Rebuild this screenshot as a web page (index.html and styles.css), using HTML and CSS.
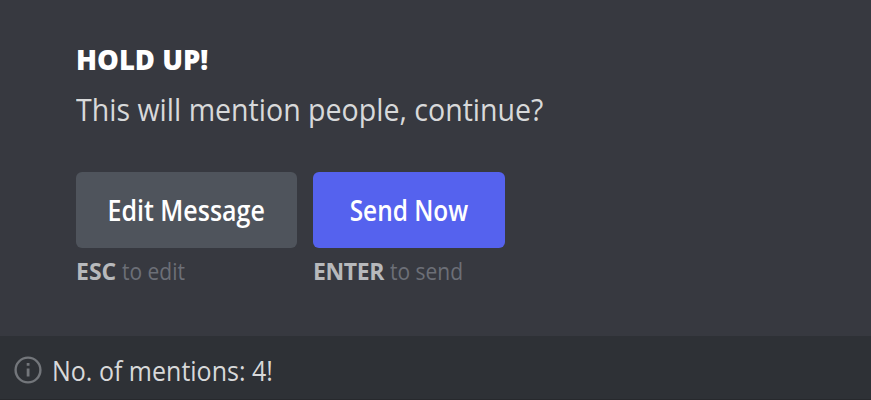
FILE: index.html
```
<!DOCTYPE html>
<html lang="en">
<head>
<meta charset="utf-8">
<title>Hold up!</title>
<link rel="stylesheet" href="styles.css">
</head>
<body>
<main class="dialog">
  <h1 class="title"><span class="fit fit-title">HOLD UP!</span></h1>
  <p class="question"><span class="fit fit-question">This will mention people, continue?</span></p>
  <div class="actions">
    <div class="action-edit">
      <button class="button button-edit"><span class="fit fit-edit">Edit Message</span></button>
      <p class="hint"><b>ESC</b> <span class="fit fit-hint">to edit</span></p>
    </div>
    <div class="action-send">
      <button class="button button-send"><span class="fit fit-send">Send Now</span></button>
      <p class="hint"><b class="enter">ENTER</b> <span class="fit fit-hint">to send</span></p>
    </div>
  </div>
</main>
<footer class="status">
  <svg class="info" viewBox="0 0 28 28" aria-hidden="true">
    <circle cx="14" cy="14" r="12.4" fill="none" stroke="currentColor" stroke-width="2.4"/>
    <path d="M12.7 7h2.8v2.8h-2.8zM12.7 12.4h2.8v8h-2.8z" fill="currentColor"/>
  </svg>
  <span class="fit fit-status">No. of mentions: 4!</span>
</footer>
</body>
</html>
```
FILE: styles.css
```
* { box-sizing: border-box; }
body {
  margin: 0;
  height: 400px;
  display: flex;
  flex-direction: column;
  overflow: hidden;
  background: #373940;
  font-family: "Open Sans", "Noto Sans", sans-serif;
}
h1, p { margin: 0; white-space: nowrap; }
.fit { display: inline-block; white-space: nowrap; transform-origin: left center; }
.fit-title { transform: scaleX(.98); }
.fit-question { transform: scaleX(.921); }
.fit-edit { transform: scaleX(.893); }
.fit-send { transform: scaleX(.872); }
.fit-hint { transform: scaleX(.913); }
.fit-status { transform: scaleX(.926); }
.dialog { height: 336px; padding: 43px 76px 0; }
.title { font-size: 28px; line-height: 32px; font-weight: 800; color: #fff; }
.question { margin-top: 14px; font-size: 31px; line-height: 40px; color: #d8d9da; }
.actions { display: flex; gap: 16px; margin-top: 43px; }
.action-edit { width: 221px; }
.action-send { width: 192px; }
.button {
  display: flex;
  align-items: center;
  justify-content: center;
  width: 100%;
  height: 76px;
  padding: 0;
  border: 0;
  border-radius: 6px;
  color: #fff;
  font: 600 28px "Open Sans", "Noto Sans", sans-serif;
}
.button .fit { transform-origin: center; }
.button-edit { background: #4f545c; }
.button-send { background: #5562ee; }
.hint {
  display: flex;
  gap: 6px;
  margin-top: 7px;
  font-size: 23px;
  line-height: 32px;
  color: #6c6f77;
}
.hint b { color: #b7b9bc; }
.hint .enter { letter-spacing: -.4px; }
.status {
  display: flex;
  align-items: center;
  gap: 10px;
  height: 64px;
  padding: 5px 14px 0;
  border-bottom: 1px solid #27292d;
  background: #2e3136;
  color: #d8d9da;
  font-size: 27px;
}
.info { width: 28px; height: 28px; color: #73767b; }
```
